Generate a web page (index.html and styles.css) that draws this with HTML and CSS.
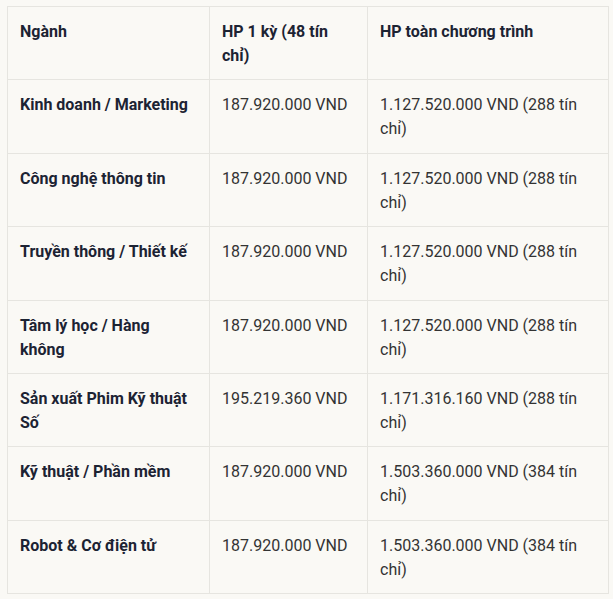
FILE: index.html
```html
<!DOCTYPE html>
<html lang="vi">
<head>
<meta charset="utf-8">
<link rel="stylesheet" href="styles.css">
</head>
<body>
<table class="fees">
  <colgroup>
    <col class="c1"><col class="c2"><col class="c3">
  </colgroup>
  <thead>
    <tr><th>Ngành</th><th>HP 1 kỳ (48 tín chỉ)</th><th>HP toàn chương trình</th></tr>
  </thead>
  <tbody>
    <tr><th>Kinh doanh / Marketing</th><td>187.920.000 VND</td><td>1.127.520.000 VND (288 tín chỉ)</td></tr>
    <tr><th>Công nghệ thông tin</th><td>187.920.000 VND</td><td>1.127.520.000 VND (288 tín chỉ)</td></tr>
    <tr><th>Truyền thông / Thiết kế</th><td>187.920.000 VND</td><td>1.127.520.000 VND (288 tín chỉ)</td></tr>
    <tr><th>Tâm lý học / Hàng không</th><td>187.920.000 VND</td><td>1.127.520.000 VND (288 tín chỉ)</td></tr>
    <tr><th>Sản xuất Phim Kỹ thuật Số</th><td>195.219.360 VND</td><td>1.171.316.160 VND (288 tín chỉ)</td></tr>
    <tr><th>Kỹ thuật / Phần mềm</th><td>187.920.000 VND</td><td>1.503.360.000 VND (384 tín chỉ)</td></tr>
    <tr><th>Robot &amp; Cơ điện tử</th><td>187.920.000 VND</td><td>1.503.360.000 VND (384 tín chỉ)</td></tr>
  </tbody>
</table>
</body>
</html>
```
FILE: styles.css
```css
html, body {
  margin: 0;
  background: #faf9f5;
}
body {
  padding: 6px 7px;
  font-family: Roboto, "Noto Sans", sans-serif;
  font-size: 16px;
  line-height: 24px;
  color: #333;
}
.fees {
  border-collapse: collapse;
  table-layout: fixed;
  width: 601px;
}
.c1 { width: 202px; }
.c2 { width: 158px; }
.c3 { width: 241px; }
.fees th, .fees td {
  border: 1px solid #e6e5e0;
  padding: 13px 12px 11.4px;
  text-align: left;
  vertical-align: top;
}
.fees th {
  font-weight: 700;
  color: #1c2333;
}
.fees td {
  font-weight: 400;
  color: #333;
}
```
